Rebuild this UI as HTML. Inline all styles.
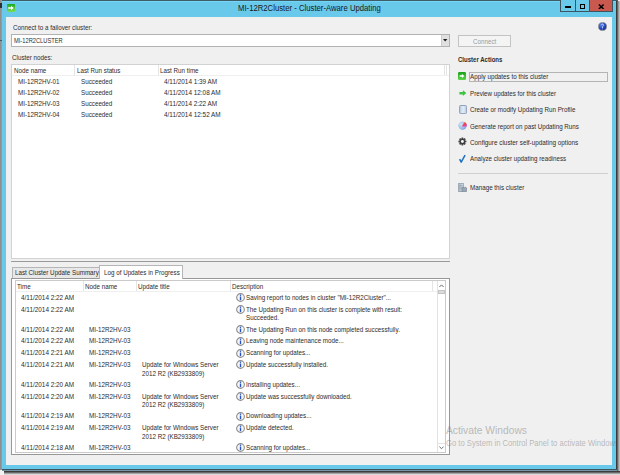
<!DOCTYPE html>
<html><head><meta charset="utf-8"><style>
html,body{margin:0;padding:0;width:620px;height:475px;overflow:hidden;background:#ebebeb}
.r{position:absolute;display:block}
.t{position:absolute;white-space:nowrap;transform-origin:0 0;font-family:"Liberation Sans",sans-serif;line-height:10px}
</style></head><body>
<div class="r" style="left:0px;top:0px;width:620px;height:475px;background:#f2f2f2"></div>
<div class="r" style="left:0px;top:0px;width:2px;height:470px;background:linear-gradient(to right,#8e8e8e 0,#8e8e8e 1.4px,#cfcfcf 2px)"></div>
<div class="r" style="left:2px;top:0px;width:616px;height:1px;background:#3f5c69"></div>
<div class="r" style="left:616px;top:1px;width:4px;height:470px;background:linear-gradient(to right,#3e3838 0,#3e3838 0.8px,#6a6a6a 1.6px,#a8a8a8 2.8px,#cdcdcd 4px)"></div>
<div class="r" style="left:4px;top:471px;width:616px;height:4px;background:linear-gradient(to bottom,#3c3c3c 0,#3c3c3c 0.8px,#8a8a8a 2px,#d8d8d8 3.5px,#f2f2f2 4px)"></div>
<div class="r" style="left:2px;top:469px;width:615px;height:1px;background:#3d5561"></div>
<div class="r" style="left:2px;top:470px;width:615px;height:1px;background:#7595a5"></div>
<div class="r" style="left:2px;top:1px;width:614px;height:468px;background:#68c9ea"></div>
<div class="r" style="left:2px;top:1px;width:614px;height:1px;background:#74d6f5"></div>
<div class="r" style="left:6px;top:17px;width:606px;height:448px;background:#f0f0f0"></div>
<svg class="r" style="left:7px;top:4px" width="8" height="8" viewBox="0 0 8 8">
<defs><linearGradient id="g1" x1="0" y1="0" x2="0" y2="1"><stop offset="0" stop-color="#1ea81e"/><stop offset="1" stop-color="#7ade5a"/></linearGradient></defs>
<rect x="0" y="0" width="8" height="8" rx="1" fill="url(#g1)"/>
<path d="M1.2 3.2H4V1.8L6.8 4L4 6.2V4.8H1.2Z" fill="#fff"/></svg>
<div class="t" style="left:237.50px;top:3px;font-size:9.2px;color:#1a1a1a;transform:scale(0.8407,1.000);transform-origin:0 8px;">MI-12R2Cluster - Cluster-Aware Updating</div>
<div class="r" style="left:560px;top:0px;width:16px;height:12px;border:1px solid #3c5560;border-top:none;box-sizing:border-box;background:#68c9ea"></div>
<div class="r" style="left:575px;top:0px;width:15px;height:12px;border:1px solid #3c5560;border-top:none;box-sizing:border-box;background:#68c9ea"></div>
<div class="r" style="left:589px;top:0px;width:24px;height:12px;background:#c9584f;border:1px solid #3c5560;border-top:none;box-sizing:border-box"></div>
<div class="r" style="left:565px;top:6px;width:6px;height:2px;background:#000"></div>
<div class="r" style="left:580px;top:4px;width:5px;height:4.5px;border:1px solid #000;border-top-width:1.6px;box-sizing:border-box"></div>
<svg class="r" style="left:598px;top:3.5px" width="6.5" height="5.5" viewBox="0 0 6.5 5.5"><path d="M0.9 0.5L5.6 5M5.6 0.5L0.9 5" stroke="#000" stroke-width="1.5"/></svg>
<svg class="r" style="left:597.9px;top:21.7px" width="9" height="9" viewBox="0 0 9 9">
<defs><radialGradient id="hg" cx="0.35" cy="0.3" r="0.75"><stop offset="0" stop-color="#5f86e6"/><stop offset="0.6" stop-color="#2448c0"/><stop offset="1" stop-color="#142c90"/></radialGradient></defs>
<circle cx="4.5" cy="4.5" r="4.05" fill="url(#hg)" stroke="#9a968a" stroke-width="0.75"/>
<path d="M3.4 3.1Q3.7 2 4.7 2.1Q5.7 2.3 5.5 3.3Q5.3 4 4.6 4.6L4.4 6.1" stroke="#dfe8ff" stroke-width="0.75" fill="none"/>
<circle cx="4.35" cy="7" r="0.42" fill="#dfe8ff"/></svg>
<div class="r" style="left:0.4px;top:3px;width:1.4px;height:4.5px;background:#303030"></div>
<div class="r" style="left:0.4px;top:39.5px;width:1.4px;height:1.5px;background:#555"></div>
<div class="t" style="left:12.60px;top:23px;font-size:7.6px;color:#2b2b2b;transform:scale(0.8237,1.000);transform-origin:0 7px;">Connect to a failover cluster:</div>
<div class="r" style="left:11px;top:34px;width:439px;height:13px;background:#fff;border:1px solid #b2b2b2;box-sizing:border-box"></div>
<div class="r" style="left:441px;top:35px;width:8px;height:11px;background:#e0e0e0;border-left:1px solid #cdcdcd;box-sizing:border-box"></div>
<svg class="r" style="left:443.2px;top:39.2px" width="4.4" height="2.6" viewBox="0 0 4.4 2.6"><path d="M0 0H4.4L2.2 2.6Z" fill="#1a1a1a"/></svg>
<div class="t" style="left:13.90px;top:36px;font-size:7.6px;color:#2b2b2b;transform:scale(0.7537,1.000);transform-origin:0 7px;">MI-12R2CLUSTER</div>
<div class="r" style="left:458px;top:35px;width:53px;height:12px;background:#f4f4f4;border:1px solid #c3c3c3;box-sizing:border-box"></div>
<div class="t" style="left:472.80px;top:37px;font-size:7.6px;color:#9a9a9a;transform:scale(0.8237,1.000);transform-origin:0 7px;">Connect</div>
<div class="t" style="left:12.20px;top:53px;font-size:7.6px;color:#2b2b2b;transform:scale(0.8237,1.000);transform-origin:0 7px;">Cluster nodes:</div>
<div class="r" style="left:11px;top:64px;width:439px;height:195px;background:#fff;border:1px solid #d2d2d2;box-sizing:border-box"></div>
<div class="r" style="left:12px;top:75px;width:437px;height:1px;background:#efefef"></div>
<div class="r" style="left:74px;top:65px;width:1px;height:10px;background:#e5e5e5"></div>
<div class="r" style="left:158px;top:65px;width:1px;height:10px;background:#e5e5e5"></div>
<div class="r" style="left:444px;top:65px;width:1px;height:10px;background:#e5e5e5"></div>
<div class="r" style="left:445.5px;top:65px;width:1px;height:10px;background:#e5e5e5"></div>
<div class="t" style="left:14.00px;top:66px;font-size:7.6px;color:#2b2b2b;transform:scale(0.8237,1.000);transform-origin:0 7px;">Node name</div>
<div class="t" style="left:76.80px;top:66px;font-size:7.6px;color:#2b2b2b;transform:scale(0.8237,1.000);transform-origin:0 7px;">Last Run status</div>
<div class="t" style="left:160.30px;top:66px;font-size:7.6px;color:#2b2b2b;transform:scale(0.8237,1.000);transform-origin:0 7px;">Last Run time</div>
<div class="t" style="left:18.10px;top:77px;font-size:7.6px;color:#2b2b2b;transform:scale(0.8237,1.000);transform-origin:0 7px;">MI-12R2HV-01</div>
<div class="t" style="left:80.50px;top:77px;font-size:7.6px;color:#2b2b2b;transform:scale(0.8237,1.000);transform-origin:0 7px;">Succeeded</div>
<div class="t" style="left:164.20px;top:77px;font-size:7.6px;color:#2b2b2b;transform:scale(0.8408,1.000);transform-origin:0 7px;">4/11/2014 1:39 AM</div>
<div class="t" style="left:18.10px;top:88px;font-size:7.6px;color:#2b2b2b;transform:scale(0.8237,1.000);transform-origin:0 7px;">MI-12R2HV-02</div>
<div class="t" style="left:80.50px;top:88px;font-size:7.6px;color:#2b2b2b;transform:scale(0.8237,1.000);transform-origin:0 7px;">Succeeded</div>
<div class="t" style="left:164.20px;top:88px;font-size:7.6px;color:#2b2b2b;transform:scale(0.8408,1.000);transform-origin:0 7px;">4/11/2014 12:08 AM</div>
<div class="t" style="left:18.10px;top:99px;font-size:7.6px;color:#2b2b2b;transform:scale(0.8237,1.000);transform-origin:0 7px;">MI-12R2HV-03</div>
<div class="t" style="left:80.50px;top:99px;font-size:7.6px;color:#2b2b2b;transform:scale(0.8237,1.000);transform-origin:0 7px;">Succeeded</div>
<div class="t" style="left:164.20px;top:99px;font-size:7.6px;color:#2b2b2b;transform:scale(0.8408,1.000);transform-origin:0 7px;">4/11/2014 2:22 AM</div>
<div class="t" style="left:18.10px;top:110px;font-size:7.6px;color:#2b2b2b;transform:scale(0.8237,1.000);transform-origin:0 7px;">MI-12R2HV-04</div>
<div class="t" style="left:80.50px;top:110px;font-size:7.6px;color:#2b2b2b;transform:scale(0.8237,1.000);transform-origin:0 7px;">Succeeded</div>
<div class="t" style="left:164.20px;top:110px;font-size:7.6px;color:#2b2b2b;transform:scale(0.8408,1.000);transform-origin:0 7px;">4/11/2014 12:52 AM</div>
<div class="t" style="left:457.70px;top:55px;font-size:7.6px;color:#2b2b2b;transform:scale(0.7945,1.000);transform-origin:0 7px;font-weight:bold">Cluster Actions</div>
<div class="t" style="left:469.80px;top:72px;font-size:7.6px;color:#2b2b2b;transform:scale(0.8250,1.000);transform-origin:0 7px;">Apply updates to this cluster</div>
<div class="t" style="left:469.80px;top:89px;font-size:7.6px;color:#2b2b2b;transform:scale(0.8158,1.000);transform-origin:0 7px;">Preview updates for this cluster</div>
<div class="t" style="left:469.80px;top:105px;font-size:7.6px;color:#2b2b2b;transform:scale(0.8211,1.000);transform-origin:0 7px;">Create or modify Updating Run Profile</div>
<div class="t" style="left:469.80px;top:122px;font-size:7.6px;color:#2b2b2b;transform:scale(0.8184,1.000);transform-origin:0 7px;">Generate report on past Updating Runs</div>
<div class="t" style="left:469.80px;top:138px;font-size:7.6px;color:#2b2b2b;transform:scale(0.8355,1.000);transform-origin:0 7px;">Configure cluster self-updating options</div>
<div class="t" style="left:469.80px;top:154px;font-size:7.6px;color:#2b2b2b;transform:scale(0.8158,1.000);transform-origin:0 7px;">Analyze cluster updating readiness</div>
<div class="r" style="left:468.5px;top:71.5px;width:139px;height:10px;border:1px solid #b4b4b4;box-sizing:border-box"></div>
<div class="r" style="left:458px;top:173px;width:150px;height:1px;background:#d0d0d0"></div>
<div class="t" style="left:469.80px;top:183px;font-size:7.6px;color:#2b2b2b;transform:scale(0.8237,1.000);transform-origin:0 7px;">Manage this cluster</div>
<div class="r" style="left:11px;top:261px;width:439px;height:1.3px;background:#9a9a9a"></div>
<div class="r" style="left:12px;top:266.5px;width:88px;height:12px;background:#e8e8e8;border:1px solid #b5b5b5;border-bottom:none;box-sizing:border-box"></div>
<div class="t" style="left:15.00px;top:268px;font-size:7.6px;color:#2b2b2b;transform:scale(0.8237,1.000);transform-origin:0 7px;">Last Cluster Update Summary</div>
<div class="r" style="left:11px;top:277.5px;width:439px;height:177px;background:#fff;border:1px solid #979797;box-sizing:border-box"></div>
<div class="r" style="left:99px;top:264.5px;width:84px;height:14px;background:#fff;border:1px solid #b5b5b5;border-bottom:none;box-sizing:border-box"></div>
<div class="t" style="left:103.60px;top:268px;font-size:7.6px;color:#2b2b2b;transform:scale(0.8237,1.000);transform-origin:0 7px;">Log of Updates in Progress</div>
<div class="r" style="left:15px;top:280px;width:431px;height:173px;background:#fff;border:1px solid #cacaca;box-sizing:border-box"></div>
<div class="r" style="left:16px;top:291px;width:421px;height:1px;background:#efefef"></div>
<div class="r" style="left:83px;top:281px;width:1px;height:10px;background:#e5e5e5"></div>
<div class="r" style="left:136px;top:281px;width:1px;height:10px;background:#e5e5e5"></div>
<div class="r" style="left:230px;top:281px;width:1px;height:10px;background:#e5e5e5"></div>
<div class="r" style="left:432px;top:281px;width:1px;height:10px;background:#e5e5e5"></div>
<div class="t" style="left:17.40px;top:282px;font-size:7.6px;color:#2b2b2b;transform:scale(0.8237,1.000);transform-origin:0 7px;">Time</div>
<div class="t" style="left:85.40px;top:282px;font-size:7.6px;color:#2b2b2b;transform:scale(0.8237,1.000);transform-origin:0 7px;">Node name</div>
<div class="t" style="left:137.70px;top:282px;font-size:7.6px;color:#2b2b2b;transform:scale(0.8237,1.000);transform-origin:0 7px;">Update title</div>
<div class="t" style="left:231.90px;top:282px;font-size:7.6px;color:#2b2b2b;transform:scale(0.8237,1.000);transform-origin:0 7px;">Description</div>
<div class="r" style="left:437px;top:281px;width:8px;height:171px;background:#fff;border-left:1px solid #e2e2e2;box-sizing:border-box"></div>
<div class="r" style="left:437px;top:443px;width:8px;height:1px;background:#e2e2e2"></div>
<svg class="r" style="left:438.8px;top:284px" width="5" height="3.5" viewBox="0 0 5 3.5"><path d="M0.4 3L2.5 0.9L4.6 3" stroke="#5a5a5a" stroke-width="0.9" fill="none"/></svg>
<div class="r" style="left:437.5px;top:290px;width:7.5px;height:4px;background:#dcdcdc;border:1px solid #c4c4c4;box-sizing:border-box"></div>
<svg class="r" style="left:438.8px;top:446.3px" width="5" height="3.5" viewBox="0 0 5 3.5"><path d="M0.4 0.6L2.5 2.7L4.6 0.6" stroke="#5a5a5a" stroke-width="0.9" fill="none"/></svg>
<div class="t" style="left:21.20px;top:293px;font-size:7.6px;color:#2b2b2b;transform:scale(0.8412,1.000);transform-origin:0 7px;">4/11/2014 2:22 AM</div>
<div class="t" style="left:246.20px;top:293px;font-size:7.6px;color:#2b2b2b;transform:scale(0.8237,1.000);transform-origin:0 7px;">Saving report to nodes in cluster "MI-12R2Cluster"...</div>
<svg class="r" style="left:235.8px;top:293.30px" width="9" height="9" viewBox="0 0 9 9"><circle cx="4.5" cy="4.5" r="3.85" fill="#f6f6f6" stroke="#8c8c8c" stroke-width="1.1"/><path d="M4.5 3.5V7.1" stroke="#2450c8" stroke-width="1.35"/><circle cx="4.5" cy="2.3" r="0.7" fill="#2450c8"/></svg>
<div class="t" style="left:21.20px;top:305px;font-size:7.6px;color:#2b2b2b;transform:scale(0.8412,1.000);transform-origin:0 7px;">4/11/2014 2:22 AM</div>
<div class="t" style="left:246.20px;top:305px;font-size:7.6px;color:#2b2b2b;transform:scale(0.8237,1.000);transform-origin:0 7px;">The Updating Run on this cluster is complete with result:</div>
<div class="t" style="left:246.20px;top:313px;font-size:7.6px;color:#2b2b2b;transform:scale(0.8237,1.000);transform-origin:0 7px;">Succeeded.</div>
<svg class="r" style="left:235.8px;top:305.15px" width="9" height="9" viewBox="0 0 9 9"><circle cx="4.5" cy="4.5" r="3.85" fill="#f6f6f6" stroke="#8c8c8c" stroke-width="1.1"/><path d="M4.5 3.5V7.1" stroke="#2450c8" stroke-width="1.35"/><circle cx="4.5" cy="2.3" r="0.7" fill="#2450c8"/></svg>
<div class="t" style="left:21.20px;top:325px;font-size:7.6px;color:#2b2b2b;transform:scale(0.8412,1.000);transform-origin:0 7px;">4/11/2014 2:22 AM</div>
<div class="t" style="left:89.30px;top:325px;font-size:7.6px;color:#2b2b2b;transform:scale(0.8237,1.000);transform-origin:0 7px;">MI-12R2HV-03</div>
<div class="t" style="left:246.20px;top:325px;font-size:7.6px;color:#2b2b2b;transform:scale(0.8237,1.000);transform-origin:0 7px;">The Updating Run on this node completed successfully.</div>
<svg class="r" style="left:235.8px;top:324.85px" width="9" height="9" viewBox="0 0 9 9"><circle cx="4.5" cy="4.5" r="3.85" fill="#f6f6f6" stroke="#8c8c8c" stroke-width="1.1"/><path d="M4.5 3.5V7.1" stroke="#2450c8" stroke-width="1.35"/><circle cx="4.5" cy="2.3" r="0.7" fill="#2450c8"/></svg>
<div class="t" style="left:21.20px;top:336px;font-size:7.6px;color:#2b2b2b;transform:scale(0.8412,1.000);transform-origin:0 7px;">4/11/2014 2:22 AM</div>
<div class="t" style="left:89.30px;top:336px;font-size:7.6px;color:#2b2b2b;transform:scale(0.8237,1.000);transform-origin:0 7px;">MI-12R2HV-03</div>
<div class="t" style="left:246.20px;top:336px;font-size:7.6px;color:#2b2b2b;transform:scale(0.8237,1.000);transform-origin:0 7px;">Leaving node maintenance mode...</div>
<svg class="r" style="left:235.8px;top:336.70px" width="9" height="9" viewBox="0 0 9 9"><circle cx="4.5" cy="4.5" r="3.85" fill="#f6f6f6" stroke="#8c8c8c" stroke-width="1.1"/><path d="M4.5 3.5V7.1" stroke="#2450c8" stroke-width="1.35"/><circle cx="4.5" cy="2.3" r="0.7" fill="#2450c8"/></svg>
<div class="t" style="left:21.20px;top:348px;font-size:7.6px;color:#2b2b2b;transform:scale(0.8412,1.000);transform-origin:0 7px;">4/11/2014 2:21 AM</div>
<div class="t" style="left:89.30px;top:348px;font-size:7.6px;color:#2b2b2b;transform:scale(0.8237,1.000);transform-origin:0 7px;">MI-12R2HV-03</div>
<div class="t" style="left:246.20px;top:348px;font-size:7.6px;color:#2b2b2b;transform:scale(0.8237,1.000);transform-origin:0 7px;">Scanning for updates...</div>
<svg class="r" style="left:235.8px;top:348.55px" width="9" height="9" viewBox="0 0 9 9"><circle cx="4.5" cy="4.5" r="3.85" fill="#f6f6f6" stroke="#8c8c8c" stroke-width="1.1"/><path d="M4.5 3.5V7.1" stroke="#2450c8" stroke-width="1.35"/><circle cx="4.5" cy="2.3" r="0.7" fill="#2450c8"/></svg>
<div class="t" style="left:21.20px;top:360px;font-size:7.6px;color:#2b2b2b;transform:scale(0.8412,1.000);transform-origin:0 7px;">4/11/2014 2:21 AM</div>
<div class="t" style="left:89.30px;top:360px;font-size:7.6px;color:#2b2b2b;transform:scale(0.8237,1.000);transform-origin:0 7px;">MI-12R2HV-03</div>
<div class="t" style="left:142.00px;top:360px;font-size:7.6px;color:#2b2b2b;transform:scale(0.8237,1.000);transform-origin:0 7px;">Update for Windows Server</div>
<div class="t" style="left:142.00px;top:369px;font-size:7.6px;color:#2b2b2b;transform:scale(0.8237,1.000);transform-origin:0 7px;">2012 R2 (KB2933809)</div>
<div class="t" style="left:246.20px;top:360px;font-size:7.6px;color:#2b2b2b;transform:scale(0.8237,1.000);transform-origin:0 7px;">Update successfully installed.</div>
<svg class="r" style="left:235.8px;top:360.40px" width="9" height="9" viewBox="0 0 9 9"><circle cx="4.5" cy="4.5" r="3.85" fill="#f6f6f6" stroke="#8c8c8c" stroke-width="1.1"/><path d="M4.5 3.5V7.1" stroke="#2450c8" stroke-width="1.35"/><circle cx="4.5" cy="2.3" r="0.7" fill="#2450c8"/></svg>
<div class="t" style="left:21.20px;top:380px;font-size:7.6px;color:#2b2b2b;transform:scale(0.8412,1.000);transform-origin:0 7px;">4/11/2014 2:20 AM</div>
<div class="t" style="left:89.30px;top:380px;font-size:7.6px;color:#2b2b2b;transform:scale(0.8237,1.000);transform-origin:0 7px;">MI-12R2HV-03</div>
<div class="t" style="left:246.20px;top:380px;font-size:7.6px;color:#2b2b2b;transform:scale(0.8237,1.000);transform-origin:0 7px;">Installing updates...</div>
<svg class="r" style="left:235.8px;top:380.10px" width="9" height="9" viewBox="0 0 9 9"><circle cx="4.5" cy="4.5" r="3.85" fill="#f6f6f6" stroke="#8c8c8c" stroke-width="1.1"/><path d="M4.5 3.5V7.1" stroke="#2450c8" stroke-width="1.35"/><circle cx="4.5" cy="2.3" r="0.7" fill="#2450c8"/></svg>
<div class="t" style="left:21.20px;top:392px;font-size:7.6px;color:#2b2b2b;transform:scale(0.8412,1.000);transform-origin:0 7px;">4/11/2014 2:20 AM</div>
<div class="t" style="left:89.30px;top:392px;font-size:7.6px;color:#2b2b2b;transform:scale(0.8237,1.000);transform-origin:0 7px;">MI-12R2HV-03</div>
<div class="t" style="left:142.00px;top:392px;font-size:7.6px;color:#2b2b2b;transform:scale(0.8237,1.000);transform-origin:0 7px;">Update for Windows Server</div>
<div class="t" style="left:142.00px;top:400px;font-size:7.6px;color:#2b2b2b;transform:scale(0.8237,1.000);transform-origin:0 7px;">2012 R2 (KB2933809)</div>
<div class="t" style="left:246.20px;top:392px;font-size:7.6px;color:#2b2b2b;transform:scale(0.8237,1.000);transform-origin:0 7px;">Update was successfully downloaded.</div>
<svg class="r" style="left:235.8px;top:391.95px" width="9" height="9" viewBox="0 0 9 9"><circle cx="4.5" cy="4.5" r="3.85" fill="#f6f6f6" stroke="#8c8c8c" stroke-width="1.1"/><path d="M4.5 3.5V7.1" stroke="#2450c8" stroke-width="1.35"/><circle cx="4.5" cy="2.3" r="0.7" fill="#2450c8"/></svg>
<div class="t" style="left:21.20px;top:411px;font-size:7.6px;color:#2b2b2b;transform:scale(0.8412,1.000);transform-origin:0 7px;">4/11/2014 2:19 AM</div>
<div class="t" style="left:89.30px;top:411px;font-size:7.6px;color:#2b2b2b;transform:scale(0.8237,1.000);transform-origin:0 7px;">MI-12R2HV-03</div>
<div class="t" style="left:246.20px;top:411px;font-size:7.6px;color:#2b2b2b;transform:scale(0.8237,1.000);transform-origin:0 7px;">Downloading updates...</div>
<svg class="r" style="left:235.8px;top:411.65px" width="9" height="9" viewBox="0 0 9 9"><circle cx="4.5" cy="4.5" r="3.85" fill="#f6f6f6" stroke="#8c8c8c" stroke-width="1.1"/><path d="M4.5 3.5V7.1" stroke="#2450c8" stroke-width="1.35"/><circle cx="4.5" cy="2.3" r="0.7" fill="#2450c8"/></svg>
<div class="t" style="left:21.20px;top:423px;font-size:7.6px;color:#2b2b2b;transform:scale(0.8412,1.000);transform-origin:0 7px;">4/11/2014 2:19 AM</div>
<div class="t" style="left:89.30px;top:423px;font-size:7.6px;color:#2b2b2b;transform:scale(0.8237,1.000);transform-origin:0 7px;">MI-12R2HV-03</div>
<div class="t" style="left:142.00px;top:423px;font-size:7.6px;color:#2b2b2b;transform:scale(0.8237,1.000);transform-origin:0 7px;">Update for Windows Server</div>
<div class="t" style="left:142.00px;top:432px;font-size:7.6px;color:#2b2b2b;transform:scale(0.8237,1.000);transform-origin:0 7px;">2012 R2 (KB2933809)</div>
<div class="t" style="left:246.20px;top:423px;font-size:7.6px;color:#2b2b2b;transform:scale(0.8237,1.000);transform-origin:0 7px;">Update detected.</div>
<svg class="r" style="left:235.8px;top:423.50px" width="9" height="9" viewBox="0 0 9 9"><circle cx="4.5" cy="4.5" r="3.85" fill="#f6f6f6" stroke="#8c8c8c" stroke-width="1.1"/><path d="M4.5 3.5V7.1" stroke="#2450c8" stroke-width="1.35"/><circle cx="4.5" cy="2.3" r="0.7" fill="#2450c8"/></svg>
<div class="t" style="left:21.20px;top:443px;font-size:7.6px;color:#2b2b2b;transform:scale(0.8412,1.000);transform-origin:0 7px;">4/11/2014 2:18 AM</div>
<div class="t" style="left:89.30px;top:443px;font-size:7.6px;color:#2b2b2b;transform:scale(0.8237,1.000);transform-origin:0 7px;">MI-12R2HV-03</div>
<div class="t" style="left:246.20px;top:443px;font-size:7.6px;color:#2b2b2b;transform:scale(0.8237,1.000);transform-origin:0 7px;">Scanning for updates...</div>
<svg class="r" style="left:235.8px;top:443.20px" width="9" height="9" viewBox="0 0 9 9"><circle cx="4.5" cy="4.5" r="3.85" fill="#f6f6f6" stroke="#8c8c8c" stroke-width="1.1"/><path d="M4.5 3.5V7.1" stroke="#2450c8" stroke-width="1.35"/><circle cx="4.5" cy="2.3" r="0.7" fill="#2450c8"/></svg>
<svg class="r" style="left:458px;top:72px" width="8" height="8" viewBox="0 0 8 8">
<defs><linearGradient id="g2" x1="0" y1="0" x2="0" y2="1"><stop offset="0" stop-color="#17a317"/><stop offset="1" stop-color="#5fd34a"/></linearGradient></defs>
<rect x="0" y="0" width="8" height="8" rx="1.2" fill="url(#g2)"/>
<path d="M1.6 3.3H3.9V2.1L6.4 4L3.9 5.9V4.7H1.6Z" fill="#fff"/></svg>
<svg class="r" style="left:458.5px;top:90px" width="8" height="7" viewBox="0 0 8 7"><path d="M0.4 1.9H3.9V0.2L7.3 3.1L3.9 6V4.4H0.4Z" fill="#3bc63b"/></svg>
<svg class="r" style="left:458.5px;top:104.8px" width="8" height="9" viewBox="0 0 8 9"><defs><linearGradient id="dg" x1="0" y1="0" x2="1" y2="0"><stop offset="0" stop-color="#b9cbe2"/><stop offset="0.5" stop-color="#e2ecf7"/><stop offset="1" stop-color="#c5d5ea"/></linearGradient></defs><rect x="0.6" y="0.5" width="6.8" height="8.1" rx="0.8" fill="url(#dg)" stroke="#8797b2" stroke-width="0.9"/></svg>
<svg class="r" style="left:457.5px;top:120.8px" width="9" height="9" viewBox="0 0 9 9"><defs><radialGradient id="pg" cx="0.35" cy="0.35" r="0.75"><stop offset="0" stop-color="#d2e2f8"/><stop offset="0.7" stop-color="#98b8e6"/><stop offset="1" stop-color="#6f8fc4"/></radialGradient><linearGradient id="wg" x1="0.2" y1="0" x2="0.8" y2="1"><stop offset="0" stop-color="#f8d04a"/><stop offset="0.45" stop-color="#f0404a"/><stop offset="1" stop-color="#e046c0"/></linearGradient></defs><circle cx="4.5" cy="4.6" r="4.2" fill="url(#pg)"/><path d="M3.9 5.4L6.6 0.8A4.3 4.3 0 0 1 8.7 5.4Z" fill="url(#wg)"/></svg>
<svg class="r" style="left:457.5px;top:137.3px" width="9" height="9" viewBox="0 0 9 9"><g fill="#3f3f3f" transform="translate(4.4 4.5)"><circle r="2.9"/><rect x="-0.85" y="-3.95" width="1.7" height="7.9"/><rect x="-0.85" y="-3.95" width="1.7" height="7.9" transform="rotate(45)"/><rect x="-0.85" y="-3.95" width="1.7" height="7.9" transform="rotate(90)"/><rect x="-0.85" y="-3.95" width="1.7" height="7.9" transform="rotate(135)"/></g><circle cx="4.4" cy="4.5" r="1.45" fill="#f4f4f4"/></svg>
<svg class="r" style="left:458px;top:153.5px" width="8.5" height="9.5" viewBox="0 0 8.5 9.5"><path d="M1.6 5.2L3.2 8.2L7.1 1.2" stroke="#1f6fbf" stroke-width="1.5" fill="none" stroke-linejoin="round"/></svg>
<svg class="r" style="left:458px;top:182.5px" width="9" height="9.5" viewBox="0 0 9 9.5"><defs><linearGradient id="sg" x1="0" y1="0" x2="1" y2="0"><stop offset="0" stop-color="#a9b8c6"/><stop offset="1" stop-color="#d2dce6"/></linearGradient></defs><rect x="0.7" y="0.5" width="4.6" height="8.2" fill="url(#sg)" stroke="#7e8c99" stroke-width="0.6"/><path d="M1.2 2.6H4.8M1.2 4.2H4.8M1.2 5.8H4.8" stroke="#8594a3" stroke-width="0.5"/><rect x="4" y="4.4" width="4.5" height="4.6" rx="0.8" fill="#9aa8b6" stroke="#6f7d8a" stroke-width="0.6"/></svg>
<div class="r" style="left:0;top:0;width:615.5px;height:475px;overflow:hidden">
<div class="t" style="left:446.00px;top:425px;font-size:10.8px;color:rgba(125,125,125,0.5);transform:scale(0.9504,1.000);transform-origin:0 8px;">Activate Windows</div>
<div class="t" style="left:446.00px;top:438px;font-size:8.6px;color:rgba(125,125,125,0.5);transform:scale(0.8895,1.000);transform-origin:0 7px;">Go to System in Control Panel to activate Windows</div>
</div>
</body></html>
